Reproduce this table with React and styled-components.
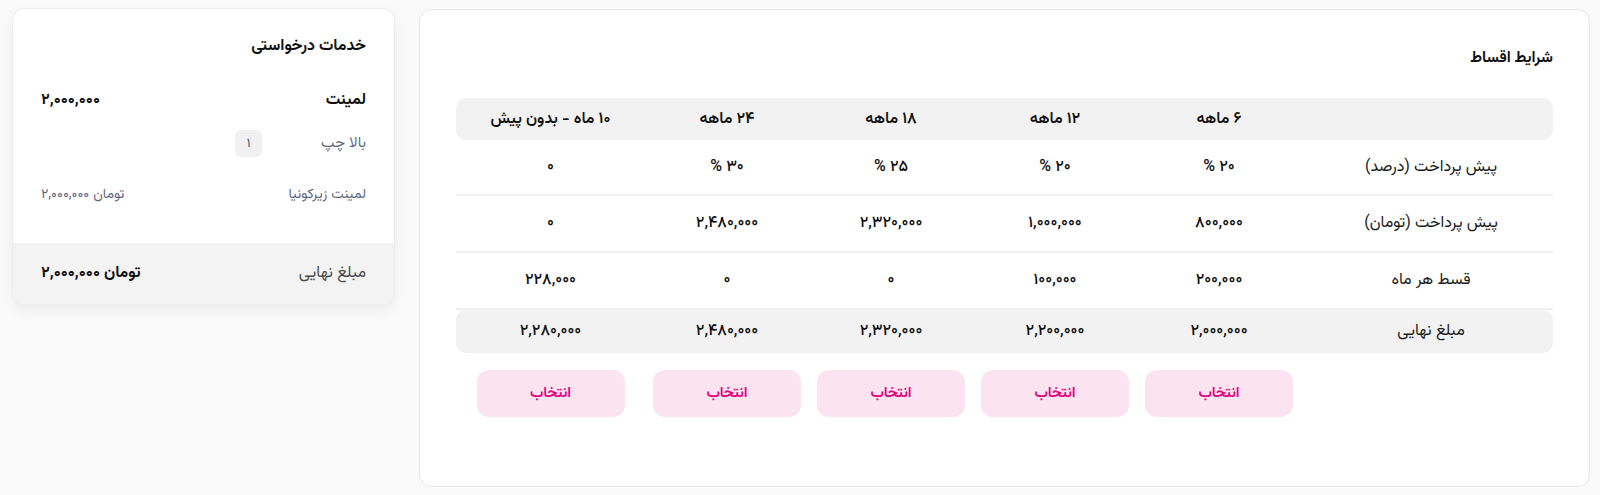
import React from 'react'
import styled, { createGlobalStyle } from 'styled-components'

const GlobalStyle = createGlobalStyle`
    html, body {
        margin: 0;
        padding: 0;
        background: #fafafa;
    }
    body {
        font-family: "Vazirmatn", "Noto Sans Arabic", "DejaVu Sans", sans-serif;
        color: #111;
    }
`

const Page = styled.div`
    direction: rtl;
    display: flex;
    align-items: flex-start;
    gap: 24px;
    padding: 9px 10px 8px 12px;
    min-height: 495px;
    box-sizing: border-box;
`

const InstallmentCard = styled.section`
    flex: 1;
    height: 478px;
    box-sizing: border-box;
    background: #fff;
    border: 1px solid #e6e6e6;
    border-radius: 12px;
    padding: 36px 36px;
`

const CardTitle = styled.h2`
    margin: 0 0 28px;
    font-size: 15.5px;
    font-weight: 700;
    line-height: 24px;
`

const Grid = styled.div`
    display: grid;
    grid-template-columns: 252px repeat(4, 164px) 1fr;
`

const Row = styled.div`
    display: contents;
`

const Cell = styled.div`
    display: flex;
    align-items: center;
    justify-content: center;
    box-sizing: border-box;
    height: ${p => p.$h || 56}px;
    padding-left: ${p => p.$label ? 8 : 0}px;
    font-size: 16px;
    font-weight: ${p => p.$bold ? 600 : 500};
    background: ${p => p.$shade ? '#f2f2f2' : 'transparent'};
    border-bottom: ${p => p.$line ? '2px solid #efefef' : 'none'};
    &:first-child {
        border-radius: ${p => p.$shade ? '0 10px 10px 0' : '0'};
    }
    &:last-child {
        border-radius: ${p => p.$shade ? '10px 0 0 10px' : '0'};
    }
`

const Label = styled.span`
    font-size: 16px;
    font-weight: 400;
    color: #1a1a1a;
`

const ButtonCell = styled.div`
    display: flex;
    justify-content: center;
    padding-top: 17px;
`

const PickButton = styled.button`
    width: 148px;
    height: 47px;
    border: none;
    border-radius: 12px;
    background: #fce3f0;
    color: #e5007d;
    font-family: inherit;
    font-size: 15px;
    font-weight: 600;
    cursor: pointer;
`

const ServiceCard = styled.aside`
    width: 383px;
    box-sizing: border-box;
    margin-top: -1px;
    background: #fff;
    border: 1px solid #ececec;
    border-radius: 12px;
    overflow: hidden;
    box-shadow: 0 6px 14px rgba(0, 0, 0, 0.06);
`

const ServiceBody = styled.div`
    padding: 27px 28px 37px;
`

const ServiceTitle = styled.h3`
    margin: 0 0 30px;
    font-size: 16px;
    font-weight: 700;
    line-height: 22px;
`

const Line = styled.div`
    display: flex;
    align-items: center;
    justify-content: space-between;
    margin-top: ${p => p.$mt || 0}px;
    min-height: ${p => p.$h || 22}px;
`

const ItemName = styled.span`
    font-size: 16px;
    font-weight: 700;
`

const SubText = styled.span`
    font-size: ${p => p.$size || 14}px;
    color: #5f6782;
`

const Price = styled.span`
    display: inline-flex;
    direction: ltr;
    gap: 4px;
    font-size: ${p => p.$size || 14}px;
    font-weight: ${p => p.$bold ? 700 : 400};
    color: ${p => p.$muted ? '#5f6782' : '#111'};
`

const Position = styled.div`
    display: flex;
    align-items: center;
    width: 131px;
    justify-content: space-between;
`

const CountBadge = styled.span`
    display: inline-flex;
    align-items: center;
    justify-content: center;
    width: 27px;
    height: 27px;
    border-radius: 6px;
    background: #f1f1f3;
    font-size: 13px;
    color: #555;
`

const ServiceFooter = styled.div`
    display: flex;
    align-items: center;
    justify-content: space-between;
    height: 61px;
    padding: 0 28px;
    background: #f3f3f3;
`

const FooterLabel = styled.span`
    font-size: 16px;
    color: #4a4a4a;
`

const plans = ['۶ ماهه', '۱۲ ماهه', '۱۸ ماهه', '۲۴ ماهه', '۱۰ ماه - بدون پیش']

const rows = [
  { label: 'پیش پرداخت (درصد)', h: 56, values: ['۲۰ %', '۲۰ %', '۲۵ %', '۳۰ %', '۰'] },
  { label: 'پیش پرداخت (تومان)', h: 57, values: ['۸۰۰,۰۰۰', '۱,۰۰۰,۰۰۰', '۲,۳۲۰,۰۰۰', '۲,۴۸۰,۰۰۰', '۰'] },
  { label: 'قسط هر ماه', h: 57, values: ['۲۰۰,۰۰۰', '۱۰۰,۰۰۰', '۰', '۰', '۲۲۸,۰۰۰'] },
]

const totals = ['۲,۰۰۰,۰۰۰', '۲,۲۰۰,۰۰۰', '۲,۳۲۰,۰۰۰', '۲,۴۸۰,۰۰۰', '۲,۲۸۰,۰۰۰']

const App = () => {
  return (
    <>
      <GlobalStyle />
      <Page>
        <InstallmentCard>
          <CardTitle>شرایط اقساط</CardTitle>
          <Grid>
            <Row>
              <Cell $h={42} $shade />
              {plans.map(p => <Cell key={p} $h={42} $shade $bold>{p}</Cell>)}
            </Row>
            {rows.map(r => (
              <Row key={r.label}>
                <Cell $line $label $h={r.h}><Label>{r.label}</Label></Cell>
                {r.values.map((v, j) => <Cell key={j} $line $h={r.h}>{v}</Cell>)}
              </Row>
            ))}
            <Row>
              <Cell $h={43} $shade $label><Label>مبلغ نهایی</Label></Cell>
              {totals.map((v, j) => <Cell key={j} $h={43} $shade>{v}</Cell>)}
            </Row>
            <Row>
              <ButtonCell />
              {totals.map((_, j) => (
                <ButtonCell key={j}><PickButton>انتخاب</PickButton></ButtonCell>
              ))}
            </Row>
          </Grid>
        </InstallmentCard>

        <ServiceCard>
          <ServiceBody>
            <ServiceTitle>خدمات درخواستی</ServiceTitle>
            <Line>
              <ItemName>لمینت</ItemName>
              <Price $bold $size={16}>۲,۰۰۰,۰۰۰</Price>
            </Line>
            <Line $mt={17} $h={27}>
              <Position>
                <SubText $size={15}>بالا چپ</SubText>
                <CountBadge>۱</CountBadge>
              </Position>
            </Line>
            <Line $mt={27}>
              <SubText>لمینت زیرکونیا</SubText>
              <Price $muted $size={14}><span>۲,۰۰۰,۰۰۰</span><span>تومان</span></Price>
            </Line>
          </ServiceBody>
          <ServiceFooter>
            <FooterLabel>مبلغ نهایی</FooterLabel>
            <Price $bold $size={16}><span>۲,۰۰۰,۰۰۰</span><span>تومان</span></Price>
          </ServiceFooter>
        </ServiceCard>
      </Page>
    </>
  )
}

export default App
